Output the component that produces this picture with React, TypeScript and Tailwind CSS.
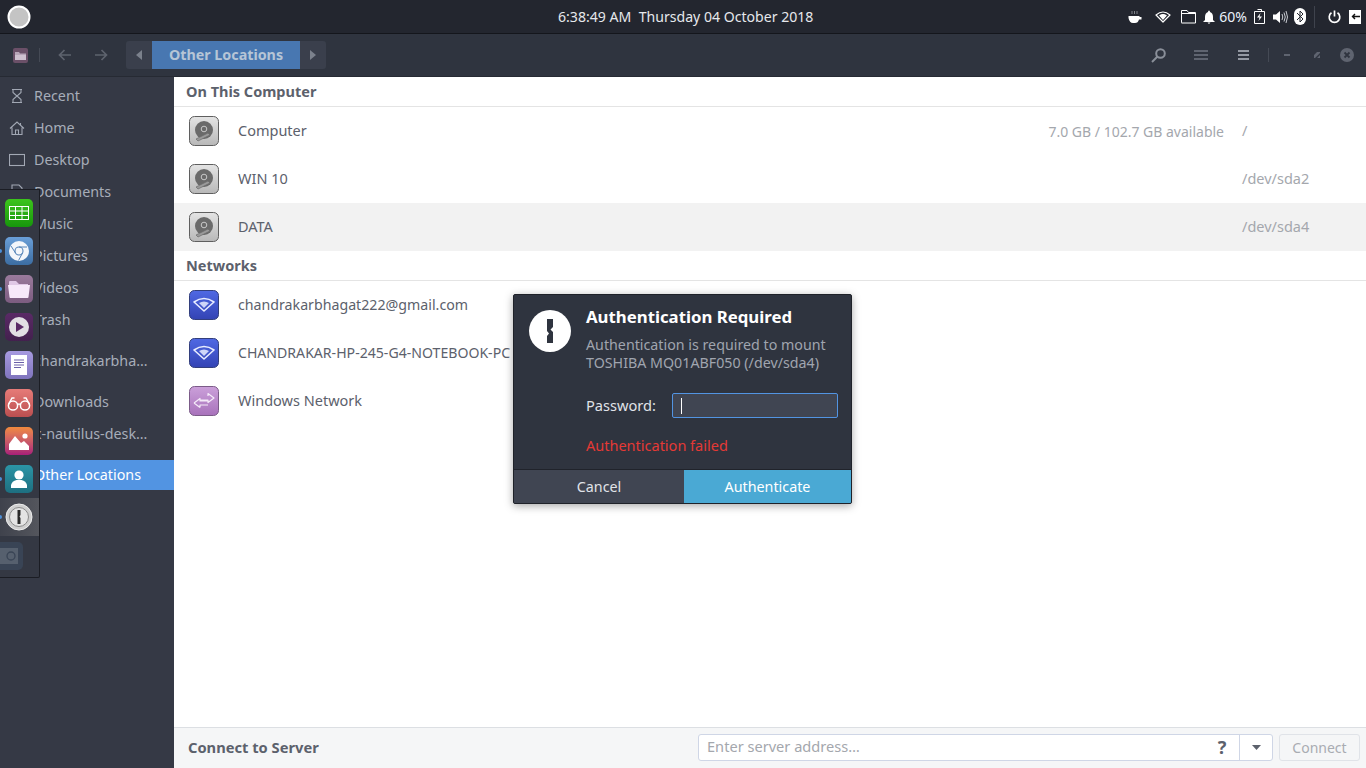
import type { ReactNode } from "react";

const FONT = "font-['Noto_Sans',sans-serif]";

function DiskIcon() {
	return (
		<svg width="30" height="30" viewBox="0 0 30 30" className="shrink-0">
			<defs>
				<linearGradient id="disk" x1="0" y1="0" x2="0" y2="1">
					<stop offset="0" stopColor="#e4e4e4" />
					<stop offset="1" stopColor="#b8b8b8" />
				</linearGradient>
			</defs>
			<rect x="0.5" y="0.5" width="29" height="29" rx="5" fill="url(#disk)" stroke="#5f5f5f" />
			<circle cx="15" cy="14" r="9" fill="#6a6a6a" />
			<circle cx="15" cy="13" r="2.8" fill="none" stroke="#c8c8c8" />
			<path d="M7 23 L19 17 L21 19 L9 25 Z" fill="#9a9a9a" stroke="#6a6a6a" strokeWidth="0.7" />
		</svg>
	);
}

function WifiTile() {
	return (
		<svg width="30" height="30" viewBox="0 0 30 30" className="shrink-0">
			<defs>
				<linearGradient id="wifi" x1="0" y1="0" x2="0" y2="1">
					<stop offset="0" stopColor="#5069e4" />
					<stop offset="1" stopColor="#3343b4" />
				</linearGradient>
			</defs>
			<rect x="0.5" y="0.5" width="29" height="29" rx="5" fill="url(#wifi)" stroke="#333f7c" />
			<path d="M5 12 Q15 5 25 12 L15 21 Z" fill="none" stroke="#e8ecff" strokeWidth="1.6" strokeLinejoin="round" />
			<path d="M10 13 Q15 10 20 13 L15 18 Z" fill="#e8ecff" opacity="0.85" />
		</svg>
	);
}

function WindowsTile() {
	return (
		<svg width="30" height="30" viewBox="0 0 30 30" className="shrink-0">
			<defs>
				<linearGradient id="smb" x1="0" y1="0" x2="0" y2="1">
					<stop offset="0" stopColor="#cba0da" />
					<stop offset="1" stopColor="#a872bb" />
				</linearGradient>
			</defs>
			<rect x="0.5" y="0.5" width="29" height="29" rx="5" fill="url(#smb)" stroke="#7b5b88" />
			<path d="M5 17 L11 12.5 V15 H19 M19 10 V7.5 L25 12 L19 16.5 V14 H11 M11 21.5 L5 17 M11 21.5 V19 H19" fill="none" stroke="#f4e9f8" strokeWidth="1.2" strokeLinejoin="round" />
		</svg>
	);
}

function SidebarIcon({ name }: { name: string }) {
	const common = { fill: "none", stroke: "#a2a8b4", strokeWidth: 1.1 };
	if (name === "recent") {
		return (
			<svg width="16" height="16" viewBox="0 0 16 16" {...common}>
				<path d="M3 1.5H13M3 14.5H13M4 2V4.5L8 8L4 11.5V14M12 2V4.5L8 8L12 11.5V14" />
			</svg>
		);
	}
	if (name === "home") {
		return (
			<svg width="16" height="16" viewBox="0 0 16 16" {...common}>
				<path d="M1 8.5L8 2L15 8.5M3 7.5V14.5H13V7.5M6.5 14.5V10H9.5V14.5M11.5 3V5" />
			</svg>
		);
	}
	if (name === "desktop") {
		return (
			<svg width="16" height="16" viewBox="0 0 16 16" {...common}>
				<rect x="0.5" y="2.5" width="15" height="11" />
			</svg>
		);
	}
	return (
		<svg width="16" height="16" viewBox="0 0 16 16" {...common}>
			<path d="M3 1H10L13 4V15H3Z" />
		</svg>
	);
}

function SideRow({ label, icon, className = "" }: { label: string; icon?: string; className?: string }) {
	return (
		<div className={`flex h-8 items-center pl-[9px] text-[14.3px] text-[#a7adb9] ${className}`}>
			<span className="flex w-[25px] shrink-0 items-center">{icon ? <SidebarIcon name={icon} /> : null}</span>
			<span className="whitespace-nowrap">{label}</span>
		</div>
	);
}

function PlaceRow({
	icon,
	label,
	labelClass = "text-[14.5px]",
	detail,
	path,
	active,
}: {
	icon: ReactNode;
	label: string;
	labelClass?: string;
	detail?: string;
	path?: string;
	active?: boolean;
}) {
	return (
		<div className={`flex h-12 items-center pl-[15px] text-[14.5px] text-[#5c616c] ${active ? "bg-[#f2f2f2]" : ""}`}>
			{icon}
			<span className={`ml-[19px] whitespace-nowrap ${labelClass}`}>{label}</span>
			<span className="ml-auto whitespace-nowrap text-[14px] text-[#a4a7ad]">{detail}</span>
			<span className="ml-[18px] w-[124px] whitespace-nowrap text-[#a4a7ad]">{path}</span>
		</div>
	);
}

function SectionTitle({ children }: { children: ReactNode }) {
	return (
		<div className="flex h-[30px] items-center border-b border-[#e4e4e4] pl-3 text-[14.5px] font-bold text-[#5c616c]">
			{children}
		</div>
	);
}

function Tile({ className, children }: { className: string; children: ReactNode }) {
	return (
		<div className={`flex h-7 w-7 items-center justify-center overflow-hidden rounded-[5px] ${className}`}>{children}</div>
	);
}

function RunningDot({ className }: { className: string }) {
	return <div className={`absolute left-0 h-[4px] w-[2px] rounded-r-full bg-[#4c8fd8] ${className}`} />;
}

function Dock() {
	return (
		<div className="absolute left-0 top-[189px] flex h-[389px] w-10 flex-col items-center gap-[10px] rounded-br-[2px] border-r border-b border-t border-[#1b1d24] bg-[#343843] pt-[9px] pr-[2px]">
			<Tile className="bg-gradient-to-b from-[#3cc41c] to-[#16960c]">
				<svg width="20" height="14" viewBox="0 0 20 14" fill="none" stroke="#fff" strokeWidth="1">
					<rect x="0.5" y="0.5" width="19" height="13" />
					<path d="M0 5H20M0 9.5H20M6.5 0V14M13 0V14" />
				</svg>
			</Tile>
			<Tile className="bg-gradient-to-b from-[#6a9fd8] to-[#3c6da2]">
				<svg width="20" height="20" viewBox="0 0 20 20">
					<circle cx="10" cy="10" r="10" fill="#f3f6fa" />
					<circle cx="10" cy="10" r="4" fill="#f3f6fa" stroke="#5584b8" strokeWidth="1.1" />
					<path d="M10 6H18M13.5 12L9.5 19.5M6.5 12L2 5" stroke="#5584b8" strokeWidth="1" />
				</svg>
			</Tile>
			<Tile className="bg-gradient-to-b from-[#9a7a9c] to-[#7c5c80]">
				<svg width="22" height="18" viewBox="0 0 22 18">
					<path d="M1 2a1 1 0 0 1 1-1h6l3 3h9v2H1Z" fill="#e0c8e6" />
					<path d="M0 5H22L20.5 17a1 1 0 0 1-1 1H2.5a1 1 0 0 1-1-1Z" fill="#f7e9fa" />
				</svg>
			</Tile>
			<Tile className="bg-gradient-to-b from-[#5a2a66] to-[#43204e]">
				<svg width="20" height="20" viewBox="0 0 20 20">
					<circle cx="10" cy="10" r="10" fill="#e2dfe4" />
					<path d="M7 5L15 10L7 15Z" fill="#5a2a66" />
				</svg>
			</Tile>
			<Tile className="bg-gradient-to-b from-[#a79ae0] to-[#7f74bd]">
				<svg width="16" height="20" viewBox="0 0 16 20">
					<rect width="16" height="20" fill="#fff" />
					<path d="M3 5H13M3 7.5H13M3 10H13M3 12.5H10" stroke="#6a60a8" strokeWidth="1" />
				</svg>
			</Tile>
			<Tile className="bg-gradient-to-b from-[#e67b78] to-[#bb4f50]">
				<svg width="24" height="16" viewBox="0 0 24 16" fill="none" stroke="#fff" strokeWidth="1.5">
					<circle cx="6" cy="10.5" r="4.6" />
					<circle cx="18" cy="10.5" r="4.6" />
					<path d="M10.5 9.5Q12 8.5 13.5 9.5M1.5 9.5L5 3H7.5M22.5 9.5L19 3H16.5" />
				</svg>
			</Tile>
			<Tile className="bg-gradient-to-b from-[#f08a3c] to-[#a81e78]">
				<svg width="20" height="18" viewBox="0 0 20 18" fill="#fff">
					<circle cx="16" cy="4" r="2.6" />
					<path d="M0 18V12L6 4L12 11L15 9L20 14V18Z" />
				</svg>
			</Tile>
			<Tile className="bg-gradient-to-b from-[#2b95a6] to-[#1d6f80]">
				<svg width="16" height="18" viewBox="0 0 16 18" fill="#fff">
					<circle cx="8" cy="5" r="4.6" />
					<path d="M0 18V15Q1 11 5.5 10H10.5Q15 11 16 15V18Z" />
				</svg>
			</Tile>
			<div className="-my-[5px] flex h-[38px] w-[39px] -mr-[2px] items-center justify-center bg-gradient-to-r from-[#3f424c] to-[#54565d]">
				<svg width="28" height="28" viewBox="0 0 28 28" className="-ml-[2px]">
					<circle cx="14" cy="14" r="13" fill="#cfcfcf" stroke="#eee" strokeWidth="1" />
					<circle cx="14" cy="14" r="9.5" fill="#e4e4e4" stroke="#8a8a8a" strokeWidth="1" />
					<path d="M12.5 7H15.5V12L14.5 13.5L15.5 15V21H12.5Z" fill="#2a2a2a" />
				</svg>
			</div>
			<div className="mt-[1px] h-7 w-[39px] -mr-[2px]">
				<svg width="24" height="28" viewBox="0 0 24 28">
					<path d="M0 0H18a5 5 0 0 1 5 5V23a5 5 0 0 1-5 5H0Z" fill="#394455" />
					<path d="M0 6H18V22H0Z" fill="#56606e" />
					<circle cx="11" cy="14" r="4" fill="none" stroke="#394455" strokeWidth="1.3" />
				</svg>
			</div>
			<RunningDot className="top-[59px]" />
			<RunningDot className="top-[97px]" />
			<RunningDot className="top-[287px]" />
			<RunningDot className="top-[325px]" />
		</div>
	);
}

function TopBar() {
	return (
		<div className="relative flex h-[34px] items-center border-b border-[#14161c] bg-[#23262f] text-[#e6e8ec]">
			<svg width="24" height="24" viewBox="0 0 24 24" className="ml-[7px]">
				<circle cx="12" cy="12" r="10.5" fill="#c4c4c4" stroke="#fff" strokeWidth="2" />
			</svg>
			<div className="absolute left-[558px] top-[7px] whitespace-nowrap text-[14.1px] leading-[20px]">
				6:38:49 AM&nbsp;&nbsp;Thursday 04 October 2018
			</div>
			<div className="ml-auto flex items-center">
				<svg width="16" height="16" viewBox="0 0 16 16" fill="#fff" className="mr-[12px]">
					<path d="M1.5 7H12.5V8H14.5V10.5H12Q11 14 8 14H6Q2.5 14 1.5 9Z" />
					<path d="M5 2V5M7.5 2V5M10 2V5" stroke="#8a8d94" strokeWidth="0.9" />
				</svg>
				<svg width="16" height="14" viewBox="0 0 16 14" fill="none" stroke="#fff" strokeWidth="1.2" className="mr-[10px]">
					<path d="M1 5Q8 -1 15 5L8 12Z" strokeLinejoin="round" />
					<path d="M5 5.5Q8 3.5 11 5.5L8 9Z" fill="#fff" />
				</svg>
				<svg width="15" height="15" viewBox="0 0 15 15" fill="none" stroke="#fff" strokeWidth="1" className="mr-[7px]">
					<path d="M0.5 13.5V1.5H6L7.5 3.5H14.5V14H0.5ZM0.5 4.5H14.5" />
				</svg>
				<svg width="12" height="14" viewBox="0 0 12 14" fill="#fff" className="mr-[4px]">
					<path d="M6 0.5Q7 0.5 7 2Q10 3 10 7V10L12 12H0L2 10V7Q2 3 5 2Q5 0.5 6 0.5ZM4.5 12.5H7.5L6 14Z" />
				</svg>
				<span className="mr-[7px] text-[14px] leading-none text-[#eaf2fb]">60%</span>
				<svg width="11" height="15" viewBox="0 0 11 15" fill="none" stroke="#fff" className="mr-[8px]">
					<path d="M0.5 2.5H10.5V14.5H0.5ZM3.5 0.5H7.5V2.5" />
					<path d="M6.5 4L3 8.5H5.5L4.5 12L8 7.5H5.5Z" fill="#fff" stroke="none" />
				</svg>
				<svg width="15" height="14" viewBox="0 0 15 14" fill="#fff" className="mr-[6px]">
					<path d="M0 4.5H3L7 1V13L3 9.5H0Z" />
					<path d="M9 4Q10.5 7 9 10M11 2.5Q13.5 7 11 11.5M13 1Q16 7 13 13" fill="none" stroke="#c9ccd2" strokeWidth="1" />
				</svg>
				<svg width="12" height="17" viewBox="0 0 12 17" className="mr-[8px]">
					<rect width="12" height="17" rx="6" fill="#fff" />
					<path d="M3 5L9 11L6 14V3L9 6L3 12" fill="none" stroke="#23262f" strokeWidth="1" />
				</svg>
				<div className="mr-[13px] h-[22px] w-px bg-[#3f434d]" />
				<svg width="13" height="14" viewBox="0 0 13 14" fill="none" stroke="#fff" strokeWidth="1.7" className="mr-[8px]">
					<path d="M6.5 0.5V6.5M3.5 2.8A5.3 5.3 0 1 0 9.5 2.8" />
				</svg>
				<div className="mr-[5px] flex h-[14px] w-[12px] items-center justify-center bg-white">
					<svg width="9" height="7" viewBox="0 0 9 7" fill="none" stroke="#111" strokeWidth="1.4">
						<path d="M9 3.5H1.5M4 1L1.5 3.5L4 6" />
					</svg>
				</div>
			</div>
		</div>
	);
}

function HeaderBar() {
	return (
		<div className="flex h-[43px] items-center border-b border-[#262a33] bg-[#2f343f]">
			<svg width="15" height="15" viewBox="0 0 15 15" className="ml-[13px]">
				<rect width="15" height="15" rx="2" fill="#6b5068" />
				<path d="M2 4H6L7 5.5H13V7H2Z" fill="#b8a5b8" />
				<path d="M2 7H13V12H2Z" fill="#cfc0cf" />
			</svg>
			<div className="ml-[11px] h-[14px] w-px bg-[#454a55]" />
			<svg width="14" height="12" viewBox="0 0 14 12" fill="none" stroke="#5e636e" strokeWidth="1.7" className="ml-[18px]">
				<path d="M13 6H2M6.5 1L1.5 6L6.5 11" />
			</svg>
			<svg width="14" height="12" viewBox="0 0 14 12" fill="none" stroke="#5e636e" strokeWidth="1.7" className="ml-[22px]">
				<path d="M1 6H12M7.5 1L12.5 6L7.5 11" />
			</svg>
			<div className="ml-[18px] flex h-7 w-[200px] overflow-hidden rounded-[3px] bg-[#3a3f4c] text-[#6f7580]">
				<div className="flex w-[26px] items-center justify-center">
					<svg width="6" height="10" viewBox="0 0 6 10" fill="#7b818c"><path d="M6 0V10L0 5Z" /></svg>
				</div>
				<div className="flex flex-1 items-center justify-center bg-[#4877b1] text-[14.3px] font-bold text-[#b6c5d6]">
					Other Locations
				</div>
				<div className="flex w-[26px] items-center justify-center">
					<svg width="6" height="10" viewBox="0 0 6 10" fill="#7b818c"><path d="M0 0V10L6 5Z" /></svg>
				</div>
			</div>
			<div className="ml-auto flex items-center">
				<svg width="15" height="15" viewBox="0 0 15 15" fill="none" stroke="#8a8f99" strokeWidth="2" className="mr-[28px]">
					<circle cx="9.5" cy="5.5" r="4.3" />
					<path d="M6.5 8.5L1 14" />
				</svg>
				<svg width="14" height="10" viewBox="0 0 14 10" fill="#5f6470" className="mr-[30px]">
					<path d="M0 0H14V2H0ZM0 4H14V6H0ZM0 8H14V10H0Z" />
				</svg>
				<svg width="11" height="10" viewBox="0 0 11 10" fill="#9499a3" className="mr-[19px]">
					<path d="M0 0H11V2H0ZM0 4H11V6H0ZM0 8H11V10H0Z" />
				</svg>
				<div className="mr-[15px] h-[14px] w-px bg-[#454a55]" />
				<div className="mr-[24px] h-[2px] w-[6px] bg-[#5f6470]" />
				<svg width="6" height="6" viewBox="0 0 6 6" fill="#5f6470" className="mr-[20px]">
					<path d="M0 3L3 0H6V1L1 6H0ZM6 3V6H3Z" />
				</svg>
				<svg width="14" height="14" viewBox="0 0 14 14" className="mr-[12px]">
					<circle cx="7" cy="7" r="7" fill="#5f6470" />
					<path d="M4.5 4.5L9.5 9.5M9.5 4.5L4.5 9.5" stroke="#2f343f" strokeWidth="1.8" />
				</svg>
			</div>
		</div>
	);
}

function AuthDialog() {
	return (
		<div className="absolute left-[513px] top-[294px] flex h-[210px] w-[339px] flex-col overflow-hidden rounded-[2px] border border-[#1f2229] bg-[#2f343f] shadow-[0_2px_8px_rgba(0,0,0,0.35)]">
			<div className="relative flex-1 pl-[72px] pt-[10px]">
				<svg width="42" height="42" viewBox="0 0 42 42" className="absolute left-[15px] top-[15px]">
					<circle cx="21" cy="21" r="21" fill="#fff" />
					<path d="M18 9H24V17L21.5 19.5L24 22V33H18V26L20 23.5L18 21Z" fill="#2f343f" />
				</svg>
				<div className="text-[16.8px] font-bold leading-6 text-white">Authentication Required</div>
				<div className="mt-[7px] text-[14.25px] leading-[18px] text-[#a0a5af]">
					Authentication is required to mount
					<br />
					TOSHIBA MQ01ABF050 (/dev/sda4)
				</div>
				<div className="mt-[21px] flex h-[25px] items-center text-[14.6px] text-[#e0e3e8]">
					<span className="w-[86px] whitespace-nowrap">Password:</span>
					<div className="flex h-[25px] w-[166px] items-center rounded-[2px] border border-[#5294e2] bg-[#404552] pl-2">
						<div className="h-4 w-px bg-white" />
					</div>
				</div>
				<div className="mt-[17px] text-[14.5px] leading-5 text-[#e53935]">Authentication failed</div>
			</div>
			<div className="flex h-[34px] border-t border-[#20232b] text-[14.3px]">
				<div className="flex w-[170px] items-center justify-center bg-[#404552] text-[#e0e3e8]">Cancel</div>
				<div className="flex flex-1 items-center justify-center bg-[#4aa9d4] text-white">Authenticate</div>
			</div>
		</div>
	);
}

export default function App() {
	return (
		<div className={`relative flex h-[768px] w-[1366px] flex-col overflow-hidden bg-white ${FONT}`}>
			<TopBar />
			<HeaderBar />
			<div className="flex flex-1 overflow-hidden">
				<div className="w-[174px] shrink-0 bg-[#353945] pt-[3px]">
					<SideRow label="Recent" icon="recent" />
					<SideRow label="Home" icon="home" />
					<SideRow label="Desktop" icon="desktop" />
					<SideRow label="Documents" icon="doc" />
					<SideRow label="Music" />
					<SideRow label="Pictures" />
					<SideRow label="Videos" />
					<SideRow label="Trash" />
					<SideRow label="chandrakarbha…" className="mt-[9px]" />
					<SideRow label="Downloads" className="mt-[9px]" />
					<SideRow label="x-nautilus-desk…" />
					<div className="mt-[10px] flex h-[30px] items-center bg-[#5294e2] pl-[34px] text-[14.3px] text-white">
						Other Locations
					</div>
				</div>
				<div className="flex min-w-0 flex-1 flex-col">
					<div className="flex-1">
						<SectionTitle>On This Computer</SectionTitle>
						<PlaceRow icon={<DiskIcon />} label="Computer" detail="7.0 GB / 102.7 GB available" path="/" />
						<PlaceRow icon={<DiskIcon />} label="WIN 10" path="/dev/sda2" />
						<PlaceRow icon={<DiskIcon />} label="DATA" path="/dev/sda4" active />
						<SectionTitle>Networks</SectionTitle>
						<PlaceRow icon={<WifiTile />} label="chandrakarbhagat222@gmail.com" labelClass="text-[14.2px]" />
						<PlaceRow icon={<WifiTile />} label="CHANDRAKAR-HP-245-G4-NOTEBOOK-PC" labelClass="text-[14.1px]" />
						<PlaceRow icon={<WindowsTile />} label="Windows Network" />
					</div>
					<div className="flex h-[41px] items-start border-t border-[#dcdfe3] bg-[#f5f6f7] pl-[14px] pr-[6px] pt-[6px]">
						<span className="text-[14.7px] font-bold leading-[27px] text-[#5c616c]">Connect to Server</span>
						<div className="ml-auto flex h-[27px] w-[575px] overflow-hidden rounded-[3px] border border-[#cfd6e6] bg-white">
							<span className="flex flex-1 items-center pb-[1px] pl-2 text-[14.6px] text-[#a4a7ad]">Enter server address…</span>
							<span className="flex w-[34px] items-center justify-center pb-[1px] text-[18px] font-bold text-[#5c616c]">?</span>
							<span className="flex w-[33px] items-center justify-center border-l border-[#cfd6e6]">
								<svg width="9" height="5" viewBox="0 0 9 5" fill="#5c616c"><path d="M0 0H9L4.5 5Z" /></svg>
							</span>
						</div>
						<div className="ml-[6px] flex h-[27px] w-[81px] items-center justify-center rounded-[3px] border border-[#e0e3e8] text-[14px] text-[#a9acb2]">
							Connect
						</div>
					</div>
				</div>
			</div>
			<Dock />
			<AuthDialog />
		</div>
	);
}
